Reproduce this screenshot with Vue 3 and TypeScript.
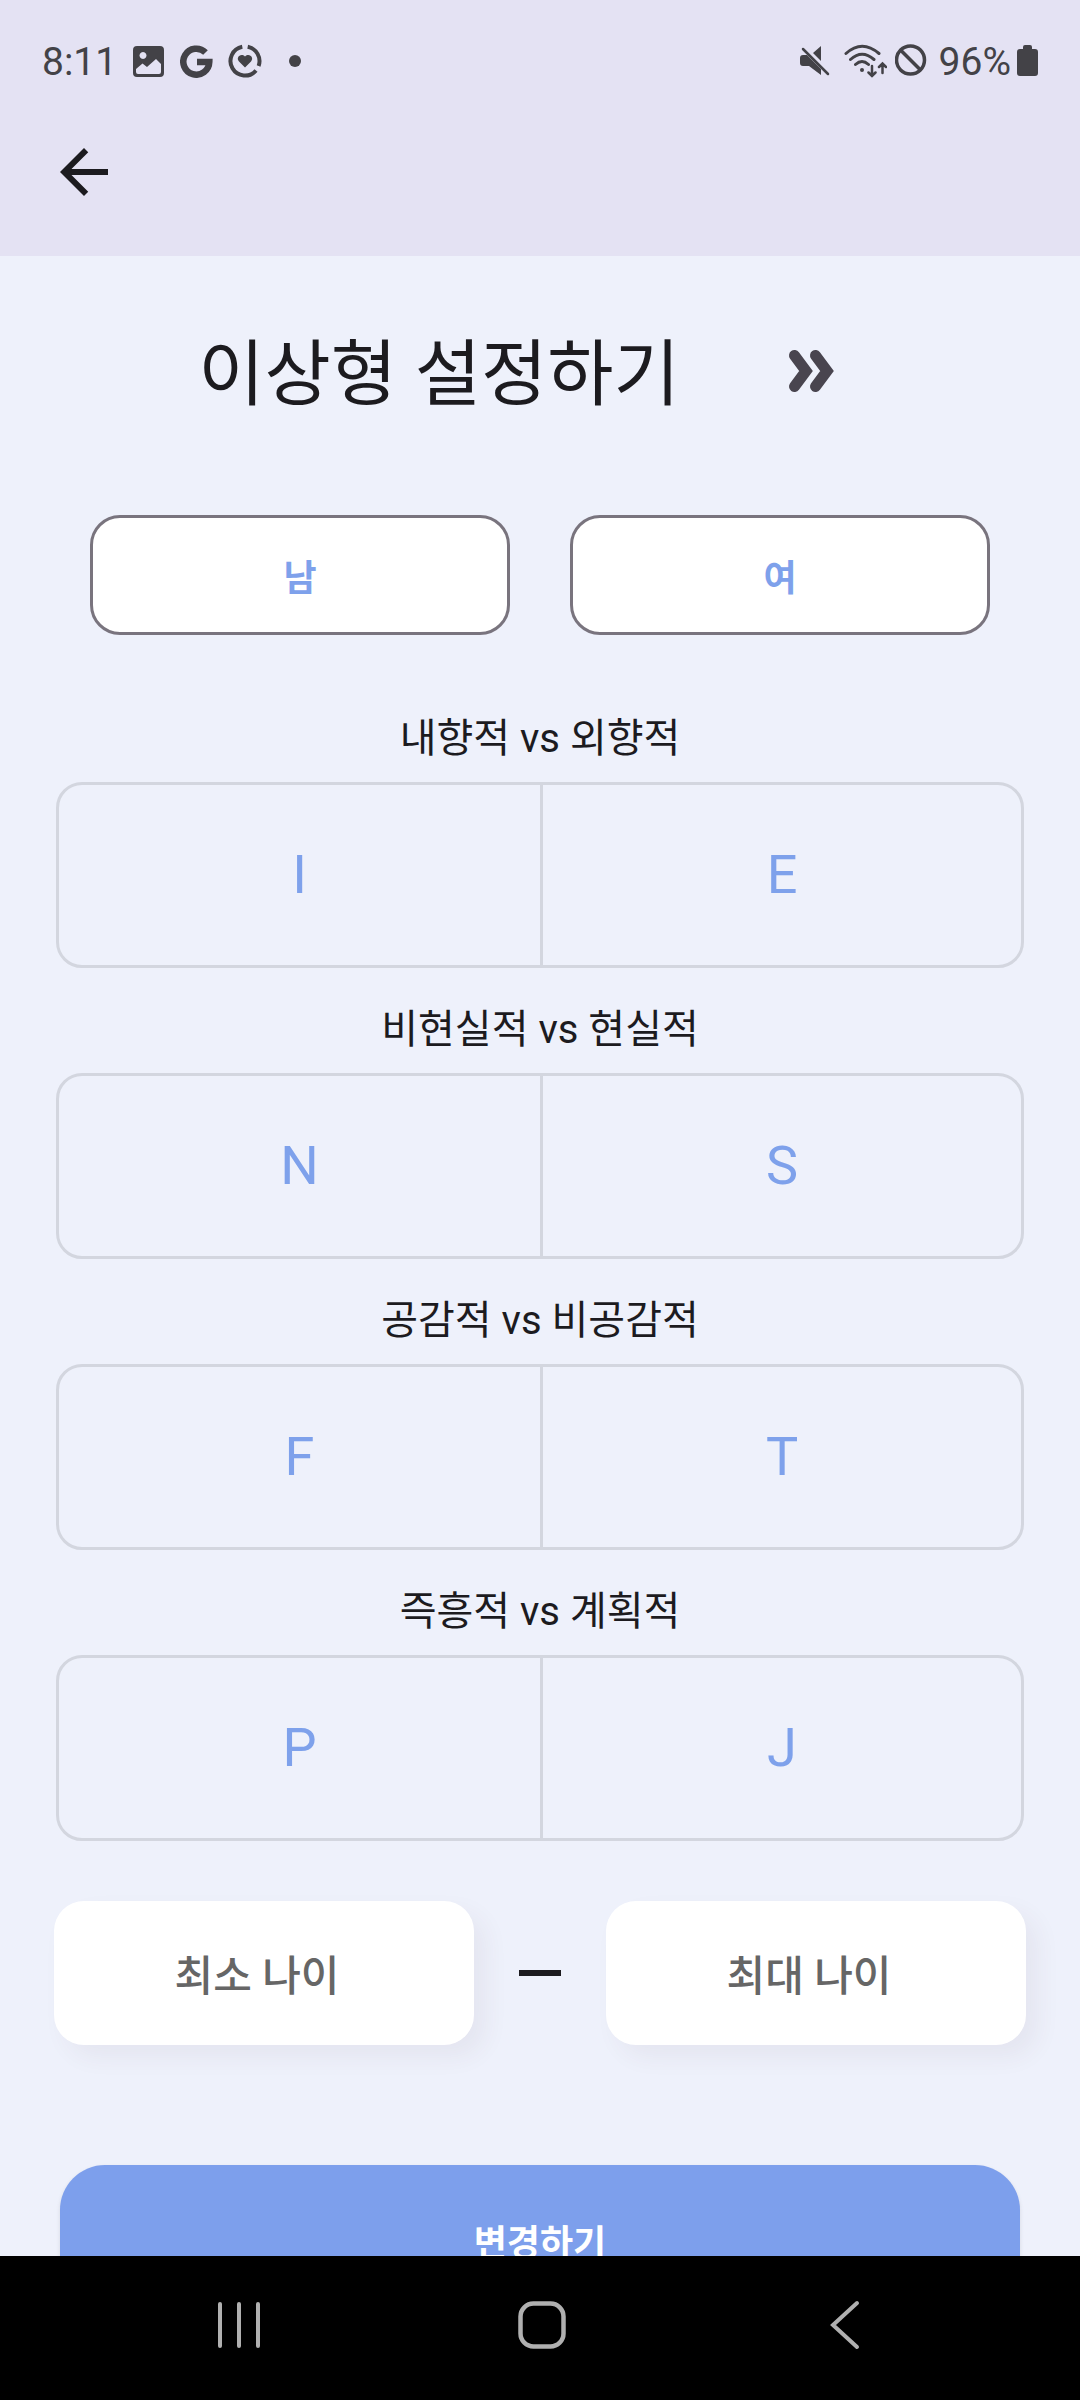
<script setup lang="ts">
import { ref } from 'vue'

interface TraitPair {
  label: string
  options: [string, string]
}

const genders: string[] = ['남', '여']
const traits: TraitPair[] = [
  { label: '내향적 vs 외향적', options: ['I', 'E'] },
  { label: '비현실적 vs 현실적', options: ['N', 'S'] },
  { label: '공감적 vs 비공감적', options: ['F', 'T'] },
  { label: '즉흥적 vs 계획적', options: ['P', 'J'] },
]

const minAge = ref('')
const maxAge = ref('')
</script>

<template>
  <div class="screen">
    <header class="top">
      <div class="status">
        <div class="status-left">
          <span>8:11</span>
          <svg width="33" height="33" viewBox="0 0 33 33" aria-hidden="true">
            <path fill-rule="evenodd" fill="#434247" d="M5 1H28Q32 1 32 5V28Q32 32 28 32H5Q1 32 1 28V5Q1 1 5 1ZM11 7a3.500 3.500 0 1 0 .01 0ZM4 24V27Q4 29 6 29H27Q29 29 29 27V19L24 14L15 22L10.500 18.500Z" />
          </svg>
          <svg width="33" height="33" viewBox="0 0 33 33" aria-hidden="true">
            <path fill="none" stroke="#434247" stroke-width="6.500" d="M25.500 7.500A13 13 0 1 0 29.300 17H17" />
          </svg>
          <svg width="34" height="34" viewBox="0 0 34 34" aria-hidden="true">
            <path fill="none" stroke="#434247" stroke-width="4" d="M14.300 2.800A14.500 14.500 0 1 0 28 26.500M19.700 2.800A14.500 14.500 0 0 1 30.600 22" />
            <path fill="#434247" d="M17 23.500L11 17.500C7.500 14 12.500 8.500 17 12.500C21.500 8.500 26.500 14 23 17.500Z" />
          </svg>
          <i class="dot"></i>
        </div>
        <div class="status-right">
          <svg width="36" height="34" viewBox="0 0 36 34" aria-hidden="true">
            <path fill="#434247" d="M0 14Q0 11 3 11H7L21 25V31L9 22H3Q0 22 0 19ZM21 2V17L13 9Z" />
            <path stroke="#434247" stroke-width="2.500" stroke-linecap="round" d="M3 5L28 30" />
          </svg>
          <svg width="43" height="34" viewBox="0 0 43 34" fill="none" stroke="#434247" stroke-width="3" stroke-linecap="round" aria-hidden="true">
            <path d="M2 9.500Q18 -5 35 9.500M6.500 15.500Q18 5 30 15.500M11.500 20.500Q18 14.500 24.500 20.500" />
            <circle cx="18" cy="26" r="2" fill="#434247" stroke="none" />
            <path stroke-width="2.500" d="M28 22V32M24.500 28.500L28 32L31.500 28.500M38.500 29V19.500M35 23L38.500 19.500L42 23" />
          </svg>
          <svg width="36" height="36" viewBox="0 0 36 36" fill="none" stroke="#434247" stroke-width="3.500" aria-hidden="true">
            <circle cx="15.500" cy="17" r="14" />
            <path d="M6 7.500L25 26.500" />
          </svg>
          <div class="battery">
            <span>96%</span>
            <svg width="21" height="32" viewBox="0 0 21 32" aria-hidden="true">
              <path fill="#434247" d="M6 5V2Q6 0 8 0H13Q15 0 15 2V4H18Q21 4 21 7V28Q21 31 18 31H3Q0 31 0 28V7Q0 4 3 4H6Z" />
            </svg>
          </div>
        </div>
      </div>
      <div class="toolbar">
        <button class="icon-button" type="button" aria-label="뒤로">
          <svg width="72" height="72" viewBox="0 0 24 24" aria-hidden="true">
            <path fill="#1c1b1f" d="M20 11H7.830l5.590-5.590L12 4l-8 8 8 8 1.410-1.410L7.830 13H20v-2z" />
          </svg>
        </button>
      </div>
    </header>

    <main class="content">
      <div class="title-row">
        <h1>이상형 설정하기</h1>
        <button class="icon-button skip" type="button" aria-label="건너뛰기">
          <svg width="48" height="48" viewBox="0 0 48 48" fill="none" stroke="#49454f" stroke-width="11" stroke-linecap="round" aria-hidden="true">
            <path d="M8.500 8.500L20 24L8.500 39.500M29.500 8.500L41 24L29.500 39.500" />
          </svg>
        </button>
      </div>

      <div class="genders">
        <button v-for="gender in genders" :key="gender" type="button">{{ gender }}</button>
      </div>

      <section v-for="trait in traits" :key="trait.label" class="trait">
        <h2>{{ trait.label }}</h2>
        <div class="pair">
          <button v-for="option in trait.options" :key="option" type="button">{{ option }}</button>
        </div>
      </section>

      <div class="ages">
        <input v-model="minAge" type="text" inputmode="numeric" placeholder="최소 나이" aria-label="최소 나이" />
        <span class="dash"></span>
        <input v-model="maxAge" type="text" inputmode="numeric" placeholder="최대 나이" aria-label="최대 나이" />
      </div>

      <button class="submit" type="button">변경하기</button>
    </main>

    <nav class="system-nav">
      <button type="button" aria-label="최근 앱">
        <svg width="48" height="52" viewBox="0 0 48 52" fill="none" stroke="#b0b0b0" stroke-width="4" stroke-linecap="round" aria-hidden="true">
          <path d="M5 5V47M24 5V47M43 5V47" />
        </svg>
      </button>
      <button type="button" aria-label="홈">
        <svg width="52" height="52" viewBox="0 0 52 52" fill="none" stroke="#b0b0b0" stroke-width="4.500" aria-hidden="true">
          <rect x="4.500" y="4.500" width="43" height="43" rx="13" />
        </svg>
      </button>
      <button type="button" aria-label="뒤로 가기">
        <svg width="52" height="52" viewBox="0 0 52 52" fill="none" stroke="#b0b0b0" stroke-width="4" stroke-linecap="round" aria-hidden="true">
          <path d="M38 4L14 26L38 48" />
        </svg>
      </button>
    </nav>
  </div>
</template>

<style>
body {
  margin: 0;
  background: #eef1fb;
}
</style>

<style scoped>
.screen {
  display: flex;
  flex-direction: column;
  height: 100vh;
  background: #eef1fb;
  color: #1c1b1f;
  font-family: Roboto, "Noto Sans CJK KR", sans-serif;
}

button,
input {
  box-sizing: border-box;
  margin: 0;
  padding: 0;
  border: 0;
  background: none;
  font-family: inherit;
}

svg {
  display: block;
}

.top {
  flex: none;
  background: #e4e2f3;
}

.status {
  display: flex;
  justify-content: space-between;
  align-items: center;
  height: 122px;
  padding: 0 42px;
  color: #434247;
  font-size: 39px;
  line-height: 48px;
}

.status-left {
  display: flex;
  align-items: center;
  gap: 15px;
}

.status-right {
  display: flex;
  align-items: center;
  gap: 8px;
}

.status span {
  padding-top: 2px;
}

.battery {
  display: flex;
  align-items: center;
  gap: 6px;
}

.dot {
  width: 12px;
  height: 12px;
  margin-left: 12px;
  border-radius: 50%;
  background: #434247;
}

.toolbar {
  padding: 14px 48px 48px;
}

.icon-button {
  display: flex;
  align-items: center;
  justify-content: center;
}

.content {
  flex: 1;
  min-height: 0;
  overflow-y: auto;
  scrollbar-width: none;
}

.title-row {
  display: flex;
  align-items: center;
  justify-content: center;
  gap: 58px;
  margin: 43px 0 72px;
}

h1 {
  margin: 0;
  padding-top: 8px;
  font-size: 72px;
  font-weight: 400;
  line-height: 96px;
}

.skip {
  width: 144px;
  height: 144px;
}

.genders {
  display: grid;
  grid-template-columns: 1fr 1fr;
  gap: 60px;
  margin: 0 90px 42px;
}

.genders button {
  height: 120px;
  border: 3px solid #79747e;
  border-radius: 30px;
  background: #fff;
  color: #7ea1eb;
  font-size: 36px;
  font-weight: 700;
}

.trait {
  margin: 0 56px;
}

h2 {
  margin: 0;
  padding: 32px 0 13px;
  font-size: 40px;
  font-weight: 400;
  line-height: 60px;
  text-align: center;
}

.pair {
  display: grid;
  grid-template-columns: 1fr 1fr;
  border: 3px solid #d3d6df;
  border-radius: 26px;
}

.pair button {
  height: 180px;
  padding-bottom: 2px;
  color: #7ea1eb;
  font-size: 54px;
}

.pair button + button {
  border-left: 3px solid #d3d6df;
}

.ages {
  display: flex;
  align-items: center;
  justify-content: space-between;
  gap: 45px;
  margin: 60px 54px 120px;
}

.ages input {
  flex: 1;
  min-width: 0;
  height: 144px;
  padding: 6px 14px 0 0;
  border-radius: 30px;
  background: #fff;
  box-shadow: 12px 12px 24px rgba(90, 50, 70, 0.06);
  color: #1c1b1f;
  font-size: 42px;
  font-weight: 500;
  text-align: center;
}

.ages input::placeholder {
  color: #666;
  opacity: 1;
}

.dash {
  width: 42px;
  height: 6px;
  background: #1c1b1f;
}

.submit {
  display: block;
  width: calc(100% - 120px);
  height: 150px;
  margin: 0 60px 48px;
  border-radius: 45px;
  background: #7d9fec;
  box-shadow: 0 2px 4px rgba(0, 0, 0, 0.1);
  color: #fff;
  font-size: 36px;
  font-weight: 700;
}

.system-nav {
  box-sizing: border-box;
  display: flex;
  flex: none;
  justify-content: space-evenly;
  align-items: center;
  height: 144px;
  padding: 0 84px 6px 88px;
  background: #000;
}

.system-nav button {
  display: flex;
  flex: 1;
  align-items: center;
  justify-content: center;
  height: 100%;
}
</style>
